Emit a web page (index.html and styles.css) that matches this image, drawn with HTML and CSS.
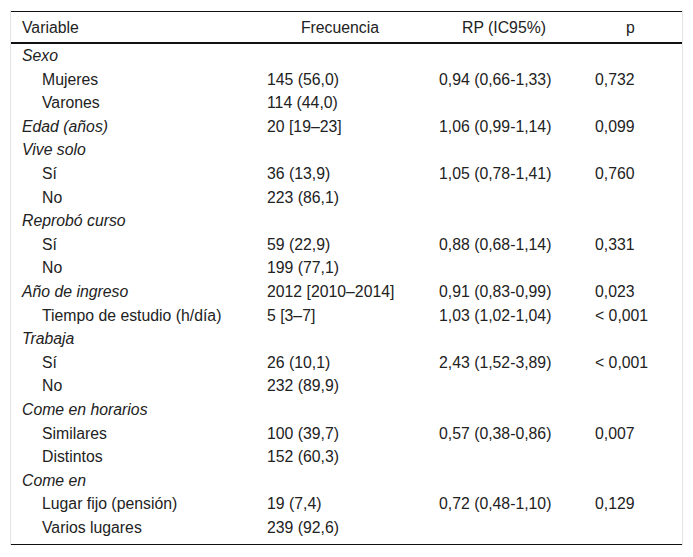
FILE: index.html
```html
<!DOCTYPE html>
<html lang="es">
<head>
<meta charset="utf-8">
<title>Tabla</title>
<link rel="stylesheet" href="styles.css">
</head>
<body>
<div class="frame">
<table class="data">
<colgroup>
<col class="c-var">
<col class="c-frec">
<col class="c-rp">
<col class="c-p">
</colgroup>
<thead>
<tr><th class="h-var">Variable</th><th>Frecuencia</th><th>RP (IC95%)</th><th>p</th></tr>
</thead>
<tbody>
<tr><td class="grp">Sexo</td><td></td><td></td><td></td></tr>
<tr><td class="sub">Mujeres</td><td>145 (56,0)</td><td>0,94 (0,66-1,33)</td><td>0,732</td></tr>
<tr><td class="sub">Varones</td><td>114 (44,0)</td><td></td><td></td></tr>
<tr><td class="grp">Edad (años)</td><td>20 [19–23]</td><td>1,06 (0,99-1,14)</td><td>0,099</td></tr>
<tr><td class="grp">Vive solo</td><td></td><td></td><td></td></tr>
<tr><td class="sub">Sí</td><td>36 (13,9)</td><td>1,05 (0,78-1,41)</td><td>0,760</td></tr>
<tr><td class="sub">No</td><td>223 (86,1)</td><td></td><td></td></tr>
<tr><td class="grp">Reprobó curso</td><td></td><td></td><td></td></tr>
<tr><td class="sub">Sí</td><td>59 (22,9)</td><td>0,88 (0,68-1,14)</td><td>0,331</td></tr>
<tr><td class="sub">No</td><td>199 (77,1)</td><td></td><td></td></tr>
<tr><td class="grp">Año de ingreso</td><td>2012 [2010–2014]</td><td>0,91 (0,83-0,99)</td><td>0,023</td></tr>
<tr><td class="sub">Tiempo de estudio (h/día)</td><td>5 [3–7]</td><td>1,03 (1,02-1,04)</td><td>&lt; 0,001</td></tr>
<tr><td class="grp">Trabaja</td><td></td><td></td><td></td></tr>
<tr><td class="sub">Sí</td><td>26 (10,1)</td><td>2,43 (1,52-3,89)</td><td>&lt; 0,001</td></tr>
<tr><td class="sub">No</td><td>232 (89,9)</td><td></td><td></td></tr>
<tr><td class="grp">Come en horarios</td><td></td><td></td><td></td></tr>
<tr><td class="sub">Similares</td><td>100 (39,7)</td><td>0,57 (0,38-0,86)</td><td>0,007</td></tr>
<tr><td class="sub">Distintos</td><td>152 (60,3)</td><td></td><td></td></tr>
<tr><td class="grp">Come en</td><td></td><td></td><td></td></tr>
<tr><td class="sub">Lugar fijo (pensión)</td><td>19 (7,4)</td><td>0,72 (0,48-1,10)</td><td>0,129</td></tr>
<tr class="last"><td class="sub">Varios lugares</td><td>239 (92,6)</td><td></td><td></td></tr>
</tbody>
</table>
</div>
</body>
</html>
```
FILE: styles.css
```css
html, body {
  margin: 0;
  padding: 0;
  background: #fff;
}
body {
  font-family: "Liberation Sans", Arial, sans-serif;
  font-size: 15.8px;
  color: #222;
}
.frame {
  margin: 10px 0 0 10px;
  width: 671px;
  padding-top: 1px;
  border-left: 1px solid #e4e4e4;
  border-right: 1px solid #e4e4e4;
}
.data {
  width: 671px;
  border-collapse: separate;
  border-spacing: 0;
  table-layout: fixed;
}
.c-var { width: 246px; }
.c-frec { width: 172px; }
.c-rp { width: 156px; }
.c-p { width: 97px; }
.data th {
  font-weight: normal;
  text-align: center;
  padding: 6px 16px 5px 10px;
  line-height: 19px;
  border-top: 1px solid #111;
  border-bottom: 2px solid #111;
  white-space: nowrap;
}
.data th.h-var {
  text-align: left;
  padding-left: 11px;
}
.data td {
  padding: 2px 10px;
  line-height: 19.6px;
  height: 19.6px;
  text-align: left;
  white-space: nowrap;
  vertical-align: middle;
}
.data td.grp {
  font-style: italic;
  padding-left: 11px;
}
.data td.sub {
  padding-left: 31px;
}
.data tr.last td {
  padding-bottom: 7px;
  border-bottom: 1px solid #111;
}
```
